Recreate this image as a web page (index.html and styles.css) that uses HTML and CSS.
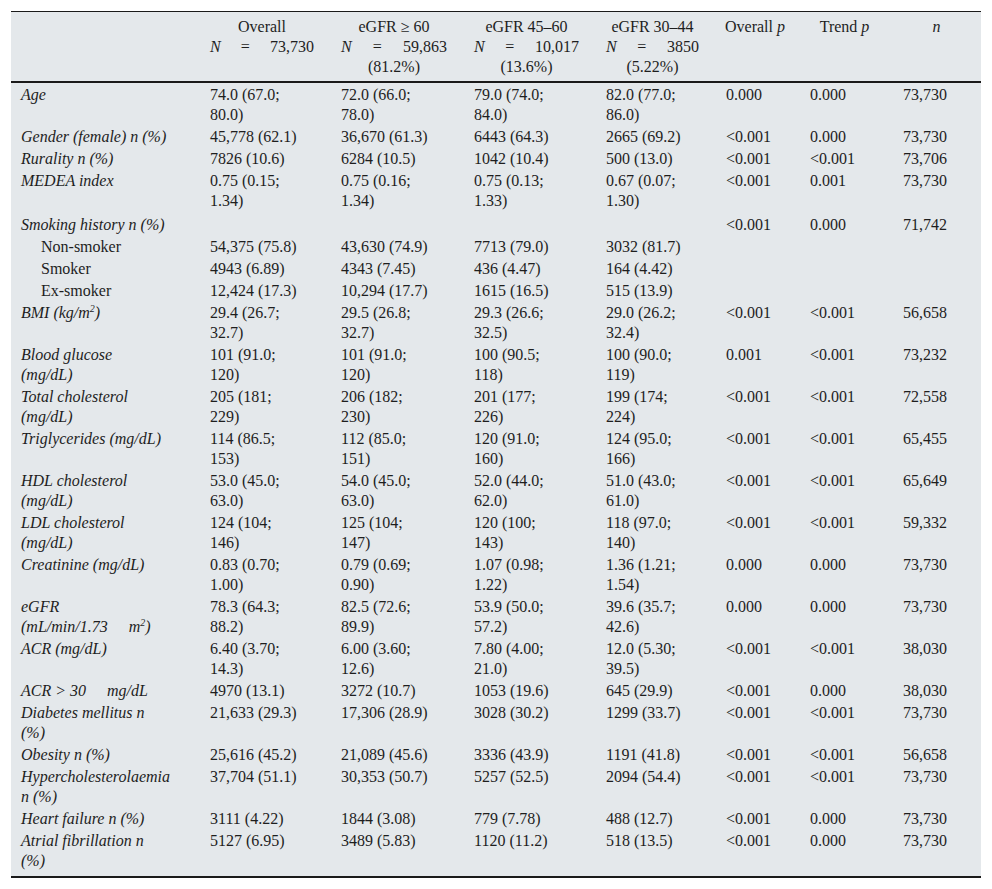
FILE: index.html
```html
<!DOCTYPE html>
<html lang="en">
<head>
<meta charset="utf-8">
<title>Baseline characteristics by eGFR</title>
<link rel="stylesheet" href="styles.css">
</head>
<body>
<div class="page">
<table class="stats">
<colgroup>
<col class="c-label"><col class="c-overall"><col class="c-g60"><col class="c-g45"><col class="c-g30"><col class="c-op"><col class="c-tp"><col class="c-n">
</colgroup>
<thead>
<tr>
<th></th>
<th><span class="hl">Overall</span><span class="nline"><i>N</i><span>=</span><span>73,730</span></span></th>
<th><span class="hl">eGFR ≥ 60</span><span class="nline"><i>N</i><span>=</span><span>59,863</span></span><span class="hl">(81.2%)</span></th>
<th><span class="hl">eGFR 45–60</span><span class="nline"><i>N</i><span>=</span><span>10,017</span></span><span class="hl">(13.6%)</span></th>
<th><span class="hl">eGFR 30–44</span><span class="nline"><i>N</i><span>=</span><span>3850</span></span><span class="hl">(5.22%)</span></th>
<th class="single">Overall <i>p</i></th>
<th class="single">Trend <i>p</i></th>
<th class="single"><i>n</i></th>
</tr>
</thead>
<tbody>
<tr class="first"><td class="lbl">Age</td><td>74.0 (67.0;<br>80.0)</td><td>72.0 (66.0;<br>78.0)</td><td>79.0 (74.0;<br>84.0)</td><td>82.0 (77.0;<br>86.0)</td><td>0.000</td><td>0.000</td><td>73,730</td></tr>
<tr><td class="lbl">Gender (female) n (%)</td><td>45,778 (62.1)</td><td>36,670 (61.3)</td><td>6443 (64.3)</td><td>2665 (69.2)</td><td>&lt;0.001</td><td>0.000</td><td>73,730</td></tr>
<tr><td class="lbl">Rurality n (%)</td><td>7826 (10.6)</td><td>6284 (10.5)</td><td>1042 (10.4)</td><td>500 (13.0)</td><td>&lt;0.001</td><td>&lt;0.001</td><td>73,706</td></tr>
<tr><td class="lbl">MEDEA index</td><td>0.75 (0.15;<br>1.34)</td><td>0.75 (0.16;<br>1.34)</td><td>0.75 (0.13;<br>1.33)</td><td>0.67 (0.07;<br>1.30)</td><td>&lt;0.001</td><td>0.001</td><td>73,730</td></tr>
<tr class="group"><td class="lbl">Smoking history n (%)</td><td></td><td></td><td></td><td></td><td>&lt;0.001</td><td>0.000</td><td>71,742</td></tr>
<tr><td class="sub">Non-smoker</td><td>54,375 (75.8)</td><td>43,630 (74.9)</td><td>7713 (79.0)</td><td>3032 (81.7)</td><td></td><td></td><td></td></tr>
<tr><td class="sub">Smoker</td><td>4943 (6.89)</td><td>4343 (7.45)</td><td>436 (4.47)</td><td>164 (4.42)</td><td></td><td></td><td></td></tr>
<tr><td class="sub">Ex-smoker</td><td>12,424 (17.3)</td><td>10,294 (17.7)</td><td>1615 (16.5)</td><td>515 (13.9)</td><td></td><td></td><td></td></tr>
<tr><td class="lbl">BMI (kg/m<sup>2</sup>)</td><td>29.4 (26.7;<br>32.7)</td><td>29.5 (26.8;<br>32.7)</td><td>29.3 (26.6;<br>32.5)</td><td>29.0 (26.2;<br>32.4)</td><td>&lt;0.001</td><td>&lt;0.001</td><td>56,658</td></tr>
<tr><td class="lbl">Blood glucose<br>(mg/dL)</td><td>101 (91.0;<br>120)</td><td>101 (91.0;<br>120)</td><td>100 (90.5;<br>118)</td><td>100 (90.0;<br>119)</td><td>0.001</td><td>&lt;0.001</td><td>73,232</td></tr>
<tr><td class="lbl">Total cholesterol<br>(mg/dL)</td><td>205 (181;<br>229)</td><td>206 (182;<br>230)</td><td>201 (177;<br>226)</td><td>199 (174;<br>224)</td><td>&lt;0.001</td><td>&lt;0.001</td><td>72,558</td></tr>
<tr><td class="lbl">Triglycerides (mg/dL)</td><td>114 (86.5;<br>153)</td><td>112 (85.0;<br>151)</td><td>120 (91.0;<br>160)</td><td>124 (95.0;<br>166)</td><td>&lt;0.001</td><td>&lt;0.001</td><td>65,455</td></tr>
<tr><td class="lbl">HDL cholesterol<br>(mg/dL)</td><td>53.0 (45.0;<br>63.0)</td><td>54.0 (45.0;<br>63.0)</td><td>52.0 (44.0;<br>62.0)</td><td>51.0 (43.0;<br>61.0)</td><td>&lt;0.001</td><td>&lt;0.001</td><td>65,649</td></tr>
<tr><td class="lbl">LDL cholesterol<br>(mg/dL)</td><td>124 (104;<br>146)</td><td>125 (104;<br>147)</td><td>120 (100;<br>143)</td><td>118 (97.0;<br>140)</td><td>&lt;0.001</td><td>&lt;0.001</td><td>59,332</td></tr>
<tr><td class="lbl">Creatinine (mg/dL)</td><td>0.83 (0.70;<br>1.00)</td><td>0.79 (0.69;<br>0.90)</td><td>1.07 (0.98;<br>1.22)</td><td>1.36 (1.21;<br>1.54)</td><td>0.000</td><td>0.000</td><td>73,730</td></tr>
<tr><td class="lbl">eGFR<br>(mL/min/1.73 <span class="gap"></span>m<sup>2</sup>)</td><td>78.3 (64.3;<br>88.2)</td><td>82.5 (72.6;<br>89.9)</td><td>53.9 (50.0;<br>57.2)</td><td>39.6 (35.7;<br>42.6)</td><td>0.000</td><td>0.000</td><td>73,730</td></tr>
<tr><td class="lbl">ACR (mg/dL)</td><td>6.40 (3.70;<br>14.3)</td><td>6.00 (3.60;<br>12.6)</td><td>7.80 (4.00;<br>21.0)</td><td>12.0 (5.30;<br>39.5)</td><td>&lt;0.001</td><td>&lt;0.001</td><td>38,030</td></tr>
<tr><td class="lbl">ACR &gt; 30 <span class="gap"></span>mg/dL</td><td>4970 (13.1)</td><td>3272 (10.7)</td><td>1053 (19.6)</td><td>645 (29.9)</td><td>&lt;0.001</td><td>0.000</td><td>38,030</td></tr>
<tr><td class="lbl">Diabetes mellitus n<br>(%)</td><td>21,633 (29.3)</td><td>17,306 (28.9)</td><td>3028 (30.2)</td><td>1299 (33.7)</td><td>&lt;0.001</td><td>&lt;0.001</td><td>73,730</td></tr>
<tr><td class="lbl">Obesity n (%)</td><td>25,616 (45.2)</td><td>21,089 (45.6)</td><td>3336 (43.9)</td><td>1191 (41.8)</td><td>&lt;0.001</td><td>&lt;0.001</td><td>56,658</td></tr>
<tr><td class="lbl">Hypercholesterolaemia<br>n (%)</td><td>37,704 (51.1)</td><td>30,353 (50.7)</td><td>5257 (52.5)</td><td>2094 (54.4)</td><td>&lt;0.001</td><td>&lt;0.001</td><td>73,730</td></tr>
<tr><td class="lbl">Heart failure n (%)</td><td>3111 (4.22)</td><td>1844 (3.08)</td><td>779 (7.78)</td><td>488 (12.7)</td><td>&lt;0.001</td><td>0.000</td><td>73,730</td></tr>
<tr class="last"><td class="lbl">Atrial fibrillation n<br>(%)</td><td>5127 (6.95)</td><td>3489 (5.83)</td><td>1120 (11.2)</td><td>518 (13.5)</td><td>&lt;0.001</td><td>0.000</td><td>73,730</td></tr>
</tbody>
</table>
</div>
</body>
</html>
```

FILE: styles.css
```css
html, body {
  margin: 0;
  padding: 0;
  background: #ffffff;
}

.page {
  padding: 11px 11px 0 11px;
}

.stats {
  width: 970px;
  table-layout: fixed;
  border-collapse: separate;
  border-spacing: 0;
  background: #e4e8eb;
  border-top: 1px solid #1a1a1a;
  border-bottom: 2px solid #1a1a1a;
  font-family: "Liberation Serif", "Times New Roman", serif;
  font-size: 16px;
  line-height: 20px;
  color: #1e1e1e;
}

.c-label { width: 186px; }
.c-overall { width: 131px; }
.c-g60 { width: 133px; }
.c-g45 { width: 132px; }
.c-g30 { width: 120px; }
.c-op { width: 84px; }
.c-tp { width: 95px; }
.c-n { width: 89px; }

.stats th {
  font-weight: normal;
  text-align: center;
  vertical-align: top;
  padding: 5px 14px 4px 13px;
  border-bottom: 2px solid #1a1a1a;
}

.stats th:first-child {
  padding-left: 10px;
}

.stats th.single {
  white-space: nowrap;
  padding-left: 8px;
  padding-right: 8px;
}

.hl {
  display: block;
}

.nline {
  display: flex;
  justify-content: space-between;
}

.stats td {
  vertical-align: top;
  text-align: left;
  white-space: nowrap;
  padding: 1px 14px 1px 13px;
}

.stats td:first-child {
  padding-left: 10px;
}

.stats td:last-child {
  padding-left: 11px;
}

.stats td.lbl {
  font-style: italic;
}

.stats td.sub {
  padding-left: 30px;
}

.stats tr.first td {
  padding-top: 2px;
}

.stats tr.group td {
  padding-top: 3px;
}

.stats tr.last td {
  padding-bottom: 5px;
}

.gap {
  display: inline-block;
  width: 17px;
}

sup {
  font-size: 10px;
  line-height: 0;
  vertical-align: 6px;
}
```
